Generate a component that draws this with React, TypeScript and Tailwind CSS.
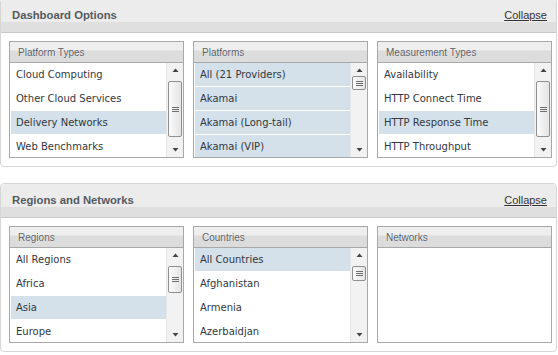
import React from "react";

type Item = { label: string; selected?: boolean };
type Scroll = { offset: number; height: number } | null;

function Arrow({ up }: { up: boolean }) {
  return (
    <svg width="7" height="4" viewBox="0 0 7 4" className="block">
      {up ? (
        <polygon points="0.5,4 6.5,4 3.5,0.5" fill="#444" />
      ) : (
        <polygon points="0.5,0 6.5,0 3.5,3.5" fill="#444" />
      )}
    </svg>
  );
}

function ScrollBar({ scroll }: { scroll: { offset: number; height: number } }) {
  return (
    <div className="flex w-[17px] shrink-0 flex-col border-l border-[#e6e6e6] bg-[#f2f2f2]">
      <div className="flex h-[12px] items-center justify-center pt-[2px]">
        <Arrow up />
      </div>
      <div className="flex flex-1 flex-col items-center">
        <div
          className="flex w-[14px] items-center justify-center rounded-[2px] border border-[#8f8f8f] bg-[linear-gradient(to_right,#fbfbfb,#e4e4e4)]"
          style={{ marginTop: scroll.offset, height: scroll.height }}
        >
          <div className="flex flex-col gap-[1px]">
            <div className="h-px w-[7px] bg-[#6f6f6f]" />
            <div className="h-px w-[7px] bg-[#6f6f6f]" />
            <div className="h-px w-[7px] bg-[#6f6f6f]" />
          </div>
        </div>
      </div>
      <div className="flex h-[12px] items-center justify-center pb-[2px]">
        <Arrow up={false} />
      </div>
    </div>
  );
}

function Panel({
  title,
  items,
  scroll,
}: {
  title: string;
  items: Item[];
  scroll: Scroll;
}) {
  return (
    <div className="flex flex-col border border-[#a8a8a8] bg-white">
      <div className="flex h-[21px] items-center border-b border-[#a8a8a8] bg-[linear-gradient(to_bottom,#eeeeee_0%,#eeeeee_40%,#dcdcdc_45%,#dcdcdc_100%)] pl-[8px] font-['Liberation_Sans',Arial,sans-serif] text-[10px] text-[#5b5f66] [text-shadow:0_0_1px_#ffffff]">
        {title}
      </div>
      <div className="flex h-[94px] overflow-hidden">
        <div className="flex-1 overflow-hidden pl-px">
          {items.map((it) => (
            <div key={it.label} className="h-[24px] border-b border-white">
              <div
                className={
                  "flex h-[23px] items-center whitespace-nowrap pl-[5px] font-['DejaVu_Sans',Verdana,sans-serif] text-[10px] text-[#333840] " +
                  (it.selected ? "bg-[#d4e1ea]" : "bg-white")
                }
              >
                {it.label}
              </div>
            </div>
          ))}
        </div>
        {scroll && <ScrollBar scroll={scroll} />}
      </div>
    </div>
  );
}

function Section({
  title,
  children,
}: {
  title: string;
  children: React.ReactNode;
}) {
  return (
    <div className="w-[557px] overflow-hidden rounded-[4px] border border-[#d6d6d6] bg-white">
      <div className="flex h-[34px] items-center justify-between border-b border-[#c8c8c8] bg-[linear-gradient(to_bottom,#ececec_0%,#ececec_70%,#dfdfdf_70%,#dfdfdf_100%)] pl-[11px] pr-[9px]">
        <span className="font-['Liberation_Sans',Arial,sans-serif] text-[11.3px] font-bold text-[#555a60]">
          {title}
        </span>
        <a className="font-['Liberation_Sans',Arial,sans-serif] text-[11px] text-[#333] underline">
          Collapse
        </a>
      </div>
      <div className="grid grid-cols-3 gap-[9px] pb-[8px] pl-[8px] pr-[4px] pt-[8px]">
        {children}
      </div>
    </div>
  );
}

export default function App() {
  return (
    <div className="h-[355px] w-[558px] overflow-hidden bg-white">
      <div className="-mt-[2px] flex flex-col gap-[16px]">
        <Section title="Dashboard Options">
          <Panel
            title="Platform Types"
            items={[
              { label: "Cloud Computing" },
              { label: "Other Cloud Services" },
              { label: "Delivery Networks", selected: true },
              { label: "Web Benchmarks" },
            ]}
            scroll={{ offset: 6, height: 56 }}
          />
          <Panel
            title="Platforms"
            items={[
              { label: "All (21 Providers)", selected: true },
              { label: "Akamai", selected: true },
              { label: "Akamai (Long-tail)", selected: true },
              { label: "Akamai (VIP)", selected: true },
            ]}
            scroll={{ offset: 1, height: 14 }}
          />
          <Panel
            title="Measurement Types"
            items={[
              { label: "Availability" },
              { label: "HTTP Connect Time" },
              { label: "HTTP Response Time", selected: true },
              { label: "HTTP Throughput" },
            ]}
            scroll={{ offset: 6, height: 56 }}
          />
        </Section>
        <Section title="Regions and Networks">
          <Panel
            title="Regions"
            items={[
              { label: "All Regions" },
              { label: "Africa" },
              { label: "Asia", selected: true },
              { label: "Europe" },
            ]}
            scroll={{ offset: 6, height: 27 }}
          />
          <Panel
            title="Countries"
            items={[
              { label: "All Countries", selected: true },
              { label: "Afghanistan" },
              { label: "Armenia" },
              { label: "Azerbaidjan" },
            ]}
            scroll={{ offset: 6, height: 15 }}
          />
          <Panel title="Networks" items={[]} scroll={null} />
        </Section>
      </div>
    </div>
  );
}
